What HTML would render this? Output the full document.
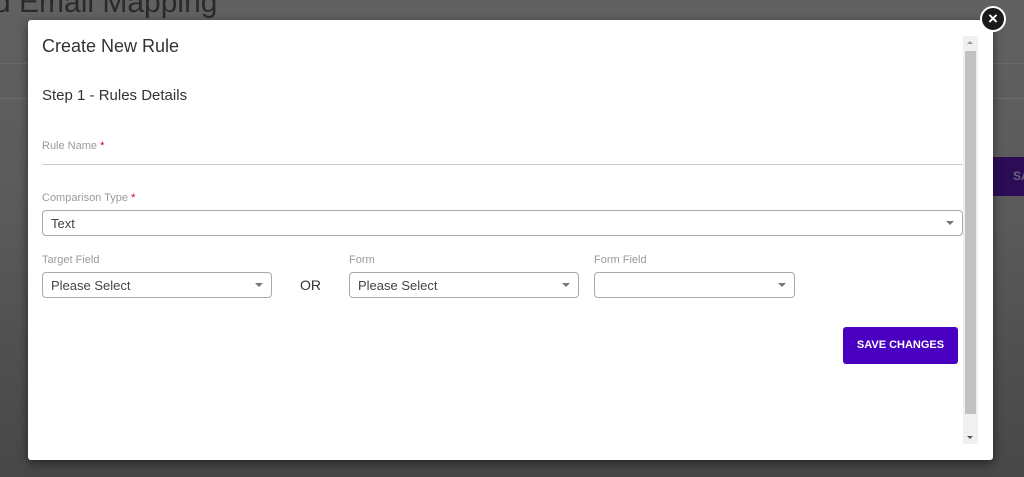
<!DOCTYPE html>
<html><head><style>
body{margin:0;width:1024px;height:477px;overflow:hidden;position:relative;font-family:"Liberation Sans",sans-serif;background:linear-gradient(#616161 0,#5b5b5b 200px,#474747 477px);}
.bgt{position:absolute;left:-6px;top:-14px;font-size:30px;color:#2a2a2a;}
.ln{position:absolute;left:0;right:0;height:1px;background:#6c6c6c}
.pb{position:absolute;left:993px;top:157px;width:40px;height:39px;background:#2b0c55;color:#6b6480;font-weight:bold;font-size:12px;line-height:39px;padding-left:20px;box-sizing:border-box}
.modal{position:absolute;left:28px;top:20px;width:965px;height:440px;background:#fff;border-radius:3px;box-shadow:0 3px 10px rgba(0,0,0,.5)}
.t{position:absolute;color:#333}
.lab{position:absolute;font-size:11px;color:#9a9a9a}
.lab b{color:#d0021b;font-weight:normal}
.sel{position:absolute;height:26px;border:1px solid #aaa;border-radius:4px;box-sizing:border-box;font-size:13px;color:#444;line-height:26px;padding-left:8px}
.sel:after{content:"";position:absolute;right:8px;top:10px;border:4px solid transparent;border-top:4px solid #777;border-bottom:0}
.sb{position:absolute;left:935px;top:16px;width:15px;height:408px;background:#f0f0f0}
.th{position:absolute;left:2px;top:15px;width:11px;height:363px;background:#c1c1c1}
.btn{position:absolute;left:815px;top:307px;width:115px;height:37px;background:#4a00c0;border-radius:3px;color:#fff;font-weight:bold;font-size:11px;text-align:center;line-height:37px}
.x{position:absolute;left:980px;top:6px;width:26px;height:26px;border-radius:50%;background:#1a1a1a;border:2px solid #fff;box-sizing:border-box;color:#fff;font-weight:bold;font-size:17px;text-align:center;line-height:21px}
</style></head><body>
<div class="bgt">d Email Mapping</div>
<div class="ln" style="top:63px"></div>
<div class="ln" style="top:98px"></div>
<div class="pb">SA</div>
<div class="modal">
<div class="t" style="left:14px;top:16px;font-size:18px">Create New Rule</div>
<div class="t" style="left:14px;top:67px;font-size:15px">Step 1 - Rules Details</div>
<div class="lab" style="left:14px;top:120px">Rule Name <b>*</b></div>
<div style="position:absolute;left:14px;top:144px;width:921px;height:1px;background:#ccc"></div>
<div class="lab" style="left:14px;top:172px">Comparison Type <b>*</b></div>
<div class="sel" style="left:14px;top:190px;width:921px">Text</div>
<div class="lab" style="left:14px;top:234px">Target Field</div>
<div class="sel" style="left:14px;top:252px;width:230px">Please Select</div>
<div class="t" style="left:272px;top:257px;font-size:14px">OR</div>
<div class="lab" style="left:321px;top:234px">Form</div>
<div class="sel" style="left:321px;top:252px;width:230px">Please Select</div>
<div class="lab" style="left:566px;top:234px">Form Field</div>
<div class="sel" style="left:566px;top:252px;width:201px"></div>
<div class="btn">SAVE CHANGES</div>
<div class="sb"><div class="th"></div>
<div style="position:absolute;left:4px;top:5px;border:3px solid transparent;border-bottom:3px solid #999;border-top:0"></div>
<div style="position:absolute;left:4px;top:400px;border:3px solid transparent;border-top:3px solid #555;border-bottom:0"></div></div>
</div>
<div class="x">×</div>
</body></html>
